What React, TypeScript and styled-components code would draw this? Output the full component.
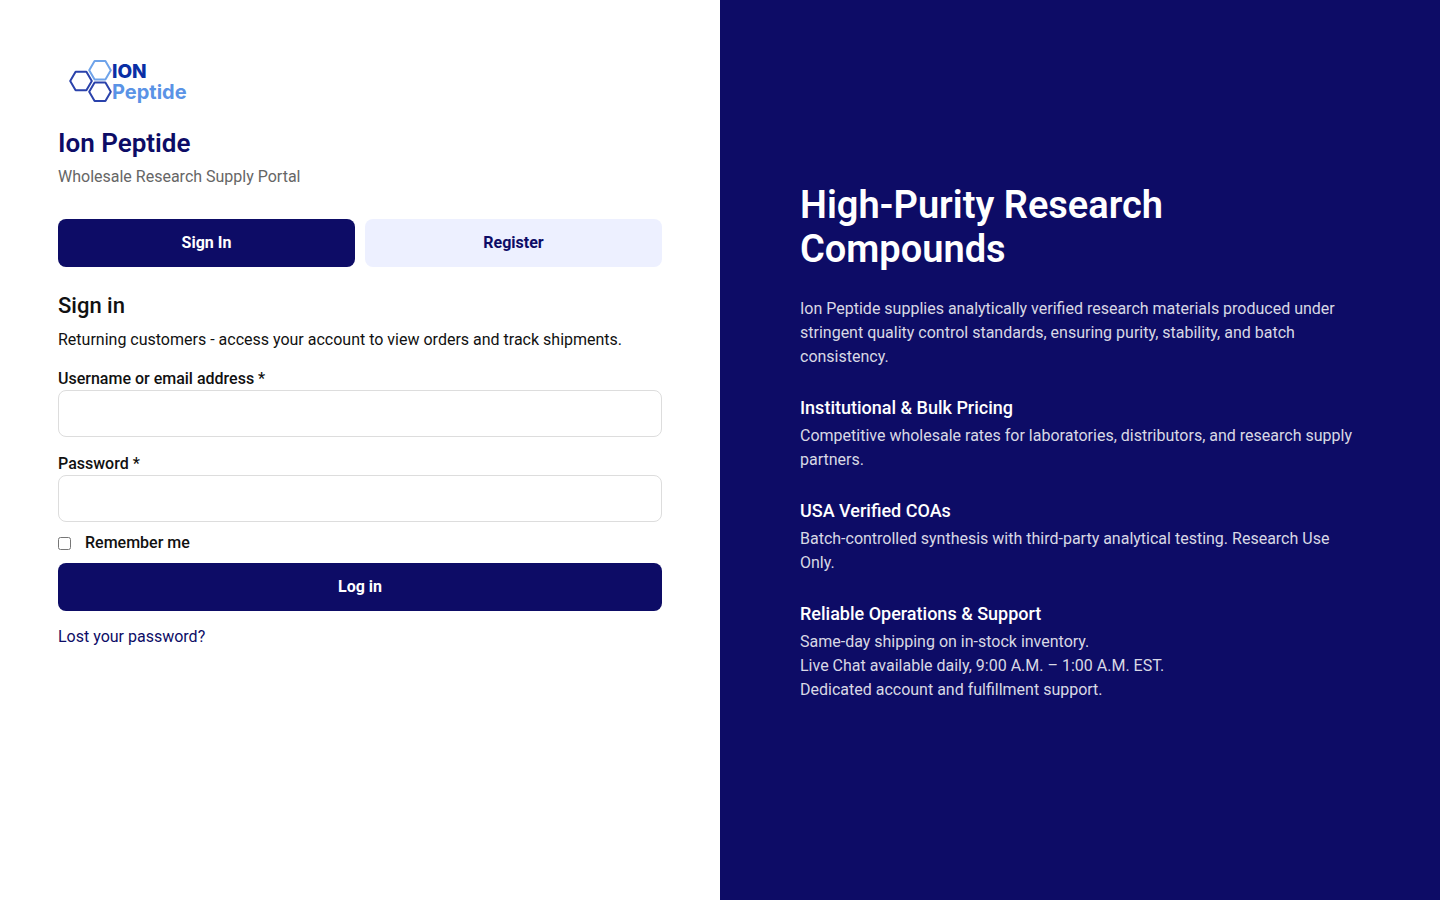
import React, { useState } from "react";
import styled, { createGlobalStyle } from "styled-components";

const navy = "#0d0c66";

const GlobalStyle = createGlobalStyle`
  *, *::before, *::after { box-sizing: border-box; }
  body {
    margin: 0;
    background: #ffffff;
    color: #111111;
    font-family: Roboto, "Liberation Sans", sans-serif;
    font-size: 16px;
    line-height: 24px;
  }
  h1, h2, h3, p { margin: 0; }
`;

const Page = styled.main`
  display: grid;
  grid-template-columns: 1fr 1fr;
  min-height: 100vh;
`;

const AccountPane = styled.section`
  padding: 48px 58px;
`;

const Logo = styled.svg`
  display: block;
  width: 140px;
  height: 64px;
  margin-bottom: 16px;
`;

const BrandName = styled.h1`
  color: ${navy};
  font-size: 26px;
  font-weight: 600;
  line-height: 30px;
`;

const Tagline = styled.p`
  margin-top: 7px;
  color: #666666;
`;

const Tabs = styled.div`
  display: grid;
  grid-template-columns: 1fr 1fr;
  gap: 10px;
  margin-top: 30px;
`;

const Button = styled.button<{ $quiet?: boolean }>`
  width: 100%;
  height: 48px;
  padding: 0 16px;
  border: 0;
  border-radius: 8px;
  background: ${(p) => (p.$quiet ? "#edf0ff" : navy)};
  color: ${(p) => (p.$quiet ? navy : "#ffffff")};
  font: inherit;
  font-weight: 700;
  cursor: pointer;
`;

const FormTitle = styled.h2`
  margin-top: 26px;
  font-size: 22px;
  font-weight: 500;
  line-height: 26px;
`;

const Intro = styled.p`
  margin: 9px 0 16px;
`;

const Field = styled.div`
  display: flex;
  flex-direction: column;
  & + & { margin-top: 16px; }
`;

const Label = styled.label`
  font-weight: 500;
  line-height: 22px;
`;

const TextInput = styled.input`
  width: 100%;
  height: 47px;
  padding: 0 14px;
  border: 1px solid #dddddd;
  border-radius: 8px;
  background: #ffffff;
  font: inherit;
`;

const Remember = styled.label`
  display: flex;
  align-items: center;
  gap: 14px;
  width: fit-content;
  margin: 9px 0 8px;
  font-weight: 500;
`;

const Checkbox = styled.input`
  width: 13px;
  height: 13px;
  margin: 1px 0 0;
`;

const LostLink = styled.a`
  display: inline-block;
  margin-top: 14px;
  color: ${navy};
  text-decoration: none;
`;

const InfoPane = styled.aside`
  display: flex;
  flex-direction: column;
  justify-content: center;
  gap: 28px;
  padding: 62px 80px 78px;
  background: ${navy};
  color: #ffffff;
`;

const Headline = styled.h2`
  margin-bottom: 26px;
  font-size: 38px;
  font-weight: 600;
  line-height: 44px;
`;

const Copy = styled.p`
  color: rgba(255, 255, 255, 0.85);
`;

const FeatureTitle = styled.h3`
  margin-bottom: 5px;
  font-size: 18px;
  font-weight: 500;
  line-height: 22px;
`;

const features = [
  {
    title: "Institutional & Bulk Pricing",
    lines: ["Competitive wholesale rates for laboratories, distributors, and research supply partners."],
  },
  {
    title: "USA Verified COAs",
    lines: ["Batch-controlled synthesis with third-party analytical testing. Research Use Only."],
  },
  {
    title: "Reliable Operations & Support",
    lines: [
      "Same-day shipping on in-stock inventory.",
      "Live Chat available daily, 9:00 A.M. – 1:00 A.M. EST.",
      "Dedicated account and fulfillment support.",
    ],
  },
];

function BrandLogo() {
  return (
    <Logo viewBox="8 3 140 64" role="img" aria-label="ION Peptide">
      <g fill="none" strokeWidth="2" strokeLinejoin="round">
        <path stroke="#6ea3ea" d="M39.2 25.2 44.6 16h10.8l5.4 9.2-5.4 9.2H44.6z" />
        <path stroke="#2a42ab" d="M20.2 36 25.6 26.8h10.8L41.8 36l-5.4 9.2H25.6z" />
        <path stroke="#2a42ab" d="M39.2 46.8 44.6 37.6h10.8l5.4 9.2-5.4 9.2H44.6z" />
      </g>
      <g fontFamily="Inter, sans-serif" fontWeight="700">
        <text x="62" y="33" fill="#0a2fa5" fontSize="19" fontWeight="800">ION</text>
        <text x="62" y="54" fill="#5a93e6" fontSize="20">Peptide</text>
      </g>
    </Logo>
  );
}

export default function App() {
  const [registering, setRegistering] = useState(false);
  return (
    <>
      <GlobalStyle />
      <Page>
        <AccountPane>
          <BrandLogo />
          <BrandName>Ion Peptide</BrandName>
          <Tagline>Wholesale Research Supply Portal</Tagline>
          <Tabs>
            <Button type="button" $quiet={registering} onClick={() => setRegistering(false)}>Sign In</Button>
            <Button type="button" $quiet={!registering} onClick={() => setRegistering(true)}>Register</Button>
          </Tabs>
          <form onSubmit={(e) => e.preventDefault()}>
            <FormTitle>Sign in</FormTitle>
            <Intro>Returning customers - access your account to view orders and track shipments.</Intro>
            <Field>
              <Label htmlFor="username">Username or email address *</Label>
              <TextInput id="username" type="text" autoComplete="username" required />
            </Field>
            <Field>
              <Label htmlFor="password">Password *</Label>
              <TextInput id="password" type="password" autoComplete="current-password" required />
            </Field>
            <Remember>
              <Checkbox type="checkbox" name="remember" />
              Remember me
            </Remember>
            <Button type="submit">Log in</Button>
            <LostLink href="#lost-password">Lost your password?</LostLink>
          </form>
        </AccountPane>
        <InfoPane>
          <div>
            <Headline>High-Purity Research Compounds</Headline>
            <Copy>
              Ion Peptide supplies analytically verified research materials produced under stringent
              quality control standards, ensuring purity, stability, and batch consistency.
            </Copy>
          </div>
          {features.map((feature) => (
            <div key={feature.title}>
              <FeatureTitle>{feature.title}</FeatureTitle>
              {feature.lines.map((line) => (
                <Copy key={line}>{line}</Copy>
              ))}
            </div>
          ))}
        </InfoPane>
      </Page>
    </>
  );
}
